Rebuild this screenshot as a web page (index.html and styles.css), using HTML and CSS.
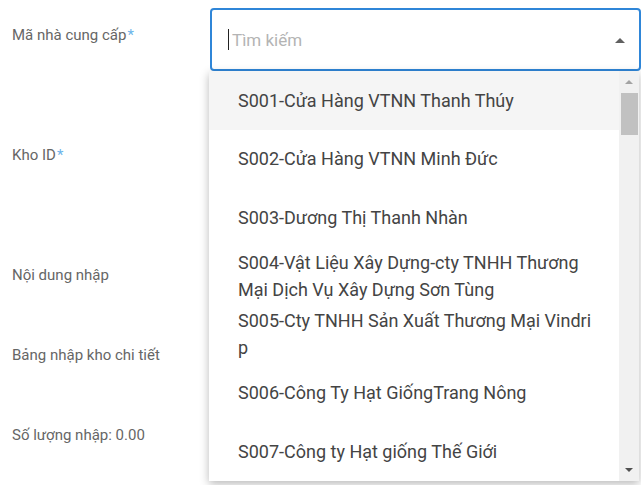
FILE: index.html
```html
<!DOCTYPE html>
<html lang="vi">
<head>
    <meta charset="UTF-8">
    <meta name="viewport" content="width=device-width, initial-scale=1.0">
    <title>Nhập kho</title>
    <link rel="stylesheet" href="styles.css">
</head>
<body>
    <form class="form">
        <div class="row row-tall">
            <label class="label">Mã nhà cung cấp<span class="req">*</span></label>
            <div class="field">
                <div class="select">
                    <span class="caret"></span>
                    <input class="search" type="text" placeholder="Tìm kiếm">
                    <span class="arrow-up"></span>
                </div>
            </div>
        </div>
        <div class="row row-tall">
            <label class="label">Kho ID<span class="req">*</span></label>
        </div>
        <div class="row">
            <label class="label">Nội dung nhập</label>
        </div>
        <div class="row">
            <label class="label">Bảng nhập kho chi tiết</label>
        </div>
        <div class="row">
            <label class="label">Số lượng nhập: 0.00</label>
        </div>

        <!-- supplier dropdown, open -->
        <div class="dropdown">
            <ul class="options">
                <li class="option active"><span>S001-Cửa Hàng VTNN Thanh Thúy</span></li>
                <li class="option"><span>S002-Cửa Hàng VTNN Minh Đức</span></li>
                <li class="option"><span>S003-Dương Thị Thanh Nhàn</span></li>
                <li class="option"><span>S004-Vật Liệu Xây Dựng-cty TNHH Thương Mại Dịch Vụ Xây Dựng Sơn Tùng</span></li>
                <li class="option"><span>S005-Cty TNHH Sản Xuất Thương Mại Vindrip</span></li>
                <li class="option"><span>S006-Công Ty Hạt GiốngTrang Nông</span></li>
                <li class="option"><span>S007-Công ty Hạt giống Thế Giới</span></li>
            </ul>
            <div class="scrollbar">
                <span class="sb-up"></span>
                <span class="sb-thumb"></span>
                <span class="sb-space"></span>
                <span class="sb-down"></span>
            </div>
        </div>
    </form>
</body>
</html>
```

FILE: styles.css
```css
body {
    font-family: Roboto, "Noto Sans", sans-serif;
    margin: 0;
    padding: 0;
    background: #fff;
}
.form {
    position: relative;
    height: 485px;
    overflow: hidden;
}
.row {
    display: flex;
    height: 80px;
}
.row-tall {
    height: 120px;
}
.label {
    width: 198px;
    padding: 25px 0 0 12px;
    font-size: 15px;
    line-height: 20px;
    color: #666;
}
.req {
    color: #6cb4ea;
    margin-left: 1px;
}
.field {
    flex: 1;
    padding-top: 8px;
}
.select {
    display: flex;
    align-items: center;
    height: 63px;
    box-sizing: border-box;
    border: 2px solid #2f86d8;
    border-radius: 4px;
    padding: 0 14px 0 16px;
}
.caret {
    width: 1px;
    height: 21px;
    background: #222;
    margin-right: 3px;
}
.search {
    flex: 1;
    border: none;
    outline: none;
    font-family: inherit;
    font-size: 17px;
    color: #333;
    padding: 0;
    background: transparent;
}
.search::placeholder {
    color: #b4b4b4;
}
.arrow-up {
    width: 0;
    height: 0;
    border-left: 5px solid transparent;
    border-right: 5px solid transparent;
    border-bottom: 5px solid #606060;
    margin-top: 2px;
}
.dropdown {
    position: absolute;
    top: 71px;
    left: 209px;
    width: 430px;
    height: 410px;
    display: flex;
    background: #fff;
    box-shadow: 0 3px 9px rgba(0, 0, 0, 0.28);
}
.options {
    flex: 1;
    list-style: none;
    margin: 0;
    padding: 0;
}
.option {
    display: flex;
    align-items: center;
    height: 58.5px;
    padding: 0 24px 0 29px;
    font-size: 18px;
    line-height: 27px;
    color: #444;
    word-break: break-all;
}
.option.active {
    background: #f5f5f5;
}
.scrollbar {
    width: 20px;
    background: #f1f1f1;
    display: flex;
    flex-direction: column;
    align-items: center;
}
.sb-up,
.sb-down {
    width: 0;
    height: 0;
    border-left: 4px solid transparent;
    border-right: 4px solid transparent;
}
.sb-up {
    border-bottom: 4px solid #a3a3a3;
    margin-top: 9px;
}
.sb-down {
    border-top: 4px solid #505050;
    margin-bottom: 9px;
}
.sb-thumb {
    width: 17px;
    height: 42px;
    margin-top: 9px;
    background: #c1c1c1;
}
.sb-space {
    flex: 1;
}
```
